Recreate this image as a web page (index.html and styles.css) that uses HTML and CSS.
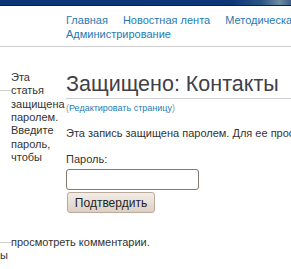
FILE: index.html
```html
<!DOCTYPE html>
<html lang="ru">
<head>
<meta charset="utf-8">
<title>Защищено: Контакты</title>
<link rel="stylesheet" href="styles.css">
</head>
<body>
<div class="topbar"></div>
<header class="header">
  <nav class="nav">
    <a href="#">Главная</a>
    <a href="#">Новостная лента</a>
    <a href="#">Методическая работа</a>
    <a href="#">Администрирование</a>
  </nav>
</header>
<div class="page">
  <div class="gutter"><span class="tick"></span></div>
  <aside class="sidebar">Эта статья защищена паролем. Введите пароль, чтобы</aside>
  <main class="main">
    <h1 class="title">Защищено: Контакты</h1>
    <div class="edit"><span class="paren">(</span><a href="#">Редактировать страницу</a><span class="paren">)</span></div>
    <p class="notice">Эта запись защищена паролем. Для ее просмотра введите, пожалуйста, пароль:</p>
    <form class="form">
      <label class="label" for="pw">Пароль:</label>
      <input class="input" id="pw" type="password">
      <button class="btn" type="button">Подтвердить</button>
    </form>
  </main>
</div>
<div class="more"><span class="tick"></span><span>просмотреть комментарии.</span></div>
<div class="stray">ы</div>
</body>
</html>
```

FILE: styles.css
```css
html, body {
  margin: 0;
  padding: 0;
  overflow: hidden;
  background: #fff;
}
body {
  font-family: "Liberation Sans", Arial, sans-serif;
  font-size: 11px;
  color: #333;
  width: 291px;
}
.topbar {
  height: 5px;
  background: linear-gradient(90deg, #0b3575 0%, #0d3878 80%, #2c5585 90%, #6f8aa0 96%, #3c5f8a 100%);
  border-bottom: 1px solid #08214a;
}
.header {
  border-bottom: 1px solid #cfcfcf;
  padding: 7px 0 5px 66px;
}
.nav {
  width: 300px;
  display: flex;
  flex-wrap: wrap;
  column-gap: 15px;
  line-height: 14px;
}
.nav a {
  color: #1f7ab3;
  text-decoration: none;
  white-space: nowrap;
}
.page {
  display: grid;
  grid-template-columns: 11px 55px 420px;
}
.gutter {
  padding-top: 43px;
}
.tick {
  display: block;
  width: 11px;
  height: 1px;
  background: #cdcdcd;
}
.sidebar {
  width: 52px;
  padding-top: 24px;
  line-height: 13.33px;
  color: #333;
}
.main {
  min-width: 0;
}
.title {
  margin: 24px 0 0;
  font-size: 21.5px;
  line-height: 26px;
  font-weight: normal;
  color: #3f4048;
  padding-bottom: 1px;
  border-bottom: 1px solid #cfcfcf;
  white-space: nowrap;
}
.edit {
  margin-top: 4px;
  font-size: 9px;
  line-height: 11px;
}
.edit a {
  color: #1f7ab3;
  text-decoration: none;
}
.paren {
  color: #999;
}
.notice {
  margin: 11px 0 0;
  line-height: 16px;
  white-space: nowrap;
}
.form {
  margin-top: 10px;
  display: flex;
  flex-direction: column;
  align-items: flex-start;
}
.label {
  line-height: 16px;
}
.input {
  margin: 2px 0 0;
  box-sizing: border-box;
  width: 133px;
  height: 21px;
  border: 1px solid #85786f;
  border-radius: 3px;
  background: #fff;
  padding: 0 4px;
}
.btn {
  margin: 2px 0 0 1px;
  box-sizing: border-box;
  width: 88px;
  height: 21px;
  border: 1px solid #b9aa9c;
  border-radius: 3px;
  background: linear-gradient(#f3ede7, #ddd0c4);
  font-family: "Liberation Sans", Arial, sans-serif;
  font-size: 12px;
  color: #222;
  padding: 0;
}
.more {
  margin-top: 22px;
  display: flex;
  align-items: center;
  line-height: 14px;
}
.stray {
  line-height: 13px;
}
```
